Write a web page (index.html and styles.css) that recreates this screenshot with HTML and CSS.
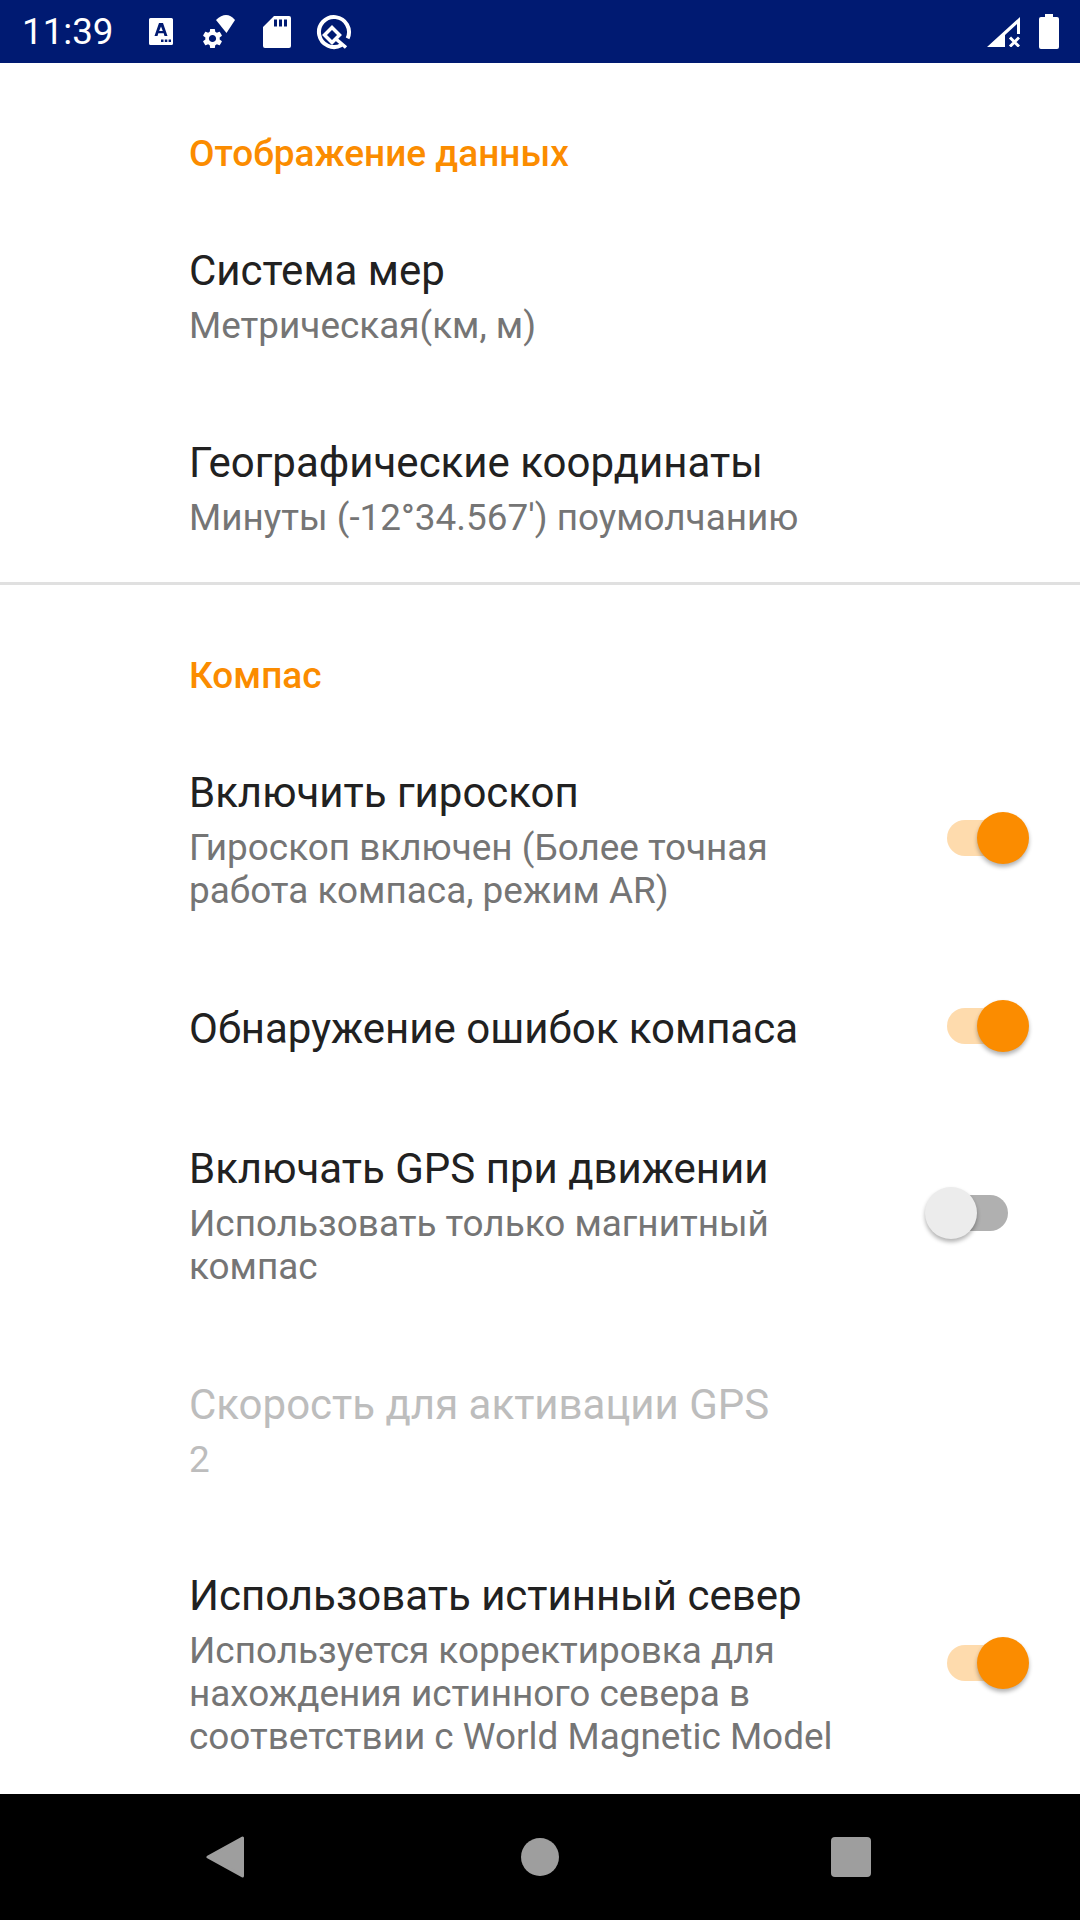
FILE: index.html
```html
<!DOCTYPE html>
<html lang="ru">
<head>
<meta charset="utf-8">
<title>Настройки</title>
<link rel="stylesheet" href="styles.css">
</head>
<body>
<div class="screen">
  <header class="statusbar">
    <div class="status-left">
      <span class="clock">11:39</span>
      <svg class="ic ic-a" viewBox="0 0 24 27"><path fill="#fff" fill-rule="evenodd" d="M1.500 0h21A1.500 1.500 0 0 1 24 1.500v24a1.500 1.500 0 0 1-1.500 1.500h-21A1.500 1.500 0 0 1 0 25.500v-24A1.500 1.500 0 0 1 1.500 0zM10 5L5.500 18h3l.8-2.800h5.400l.8 2.800h3L14 5zM12 8.500l1.800 4.500h-3.600zM12 21.500h2.500V24H12zM15.800 21.500h2.500V24h-2.500zM19.600 21.500h2.400V24h-2.400z"/></svg>
      <svg class="ic ic-gear" viewBox="0 0 33 33"><path fill="#fff" d="M14 5Q24.500-5 33 5L24.500 18z"/><path fill="#fff" transform="translate(-1.500 11.500)" d="M19.140 12.940c.04-.3.060-.61.060-.94 0-.32-.02-.64-.07-.94l2.030-1.580a.49.49 0 0 0 .12-.61l-1.920-3.320a.488.488 0 0 0-.59-.22l-2.390.96c-.5-.38-1.030-.7-1.620-.94l-.36-2.540a.484.484 0 0 0-.48-.41h-3.840c-.24 0-.43.17-.47.41l-.36 2.540c-.59.24-1.130.57-1.620.94l-2.390-.96c-.22-.08-.47 0-.59.22L2.740 8.870c-.12.21-.08.47.12.61l2.030 1.580c-.05.3-.09.63-.09.94s.02.64.07.94l-2.030 1.580a.49.49 0 0 0-.12.61l1.920 3.320c.12.22.37.29.59.22l2.390-.96c.5.38 1.030.7 1.620.94l.36 2.540c.05.24.24.41.48.41h3.840c.24 0 .44-.17.47-.41l.36-2.540c.59-.24 1.130-.56 1.620-.94l2.390.96c.22.08.47 0 .59-.22l1.920-3.320c.12-.22.07-.47-.12-.61l-2.010-1.580zM12 15.600c-1.980 0-3.600-1.620-3.600-3.600s1.620-3.600 3.600-3.600 3.600 1.620 3.600 3.600-1.620 3.600-3.600 3.600z"/></svg>
      <svg class="ic ic-sd" viewBox="0 0 28 32"><path fill="#fff" fill-rule="evenodd" d="M11 0h15a2 2 0 0 1 2 2v28a2 2 0 0 1-2 2H2a2 2 0 0 1-2-2V11zM11 3.500v7h3v-7zM16 3.500v7h3v-7zM21 3.500v7h3v-7z"/></svg>
      <svg class="ic ic-q" viewBox="0 0 36 36"><path fill="none" stroke="#fff" stroke-width="4" d="M25.500 31A15 15 0 1 1 31.600 24.300"/><path fill="none" stroke="#fff" stroke-width="3.500" d="M16 13.500L23.500 21 16 28.500 8.500 21zM20 25L30 33.500"/></svg>
    </div>
    <div class="status-right">
      <svg class="ic ic-signal" viewBox="0 0 33 30"><path fill="#fff" d="M0 30L33 0v17h-3V7L18 18v12z"/><path stroke="#fff" stroke-width="3" d="M23 20.500l9 9M32 20.500l-9 9"/></svg>
      <svg class="ic ic-batt" viewBox="0 0 20 35"><path fill="#fff" d="M6 0h8v3h4a2 2 0 0 1 2 2v28a2 2 0 0 1-2 2H2a2 2 0 0 1-2-2V5a2 2 0 0 1 2-2h4z"/></svg>
    </div>
  </header>

  <main class="prefs">
    <section class="group group-first">
      <h2 class="group-title">Отображение данных</h2>
      <div class="rows">
        <div class="row"><div class="text"><div class="title">Система мер</div><div class="sub">Метрическая(км, м)</div></div></div>
        <div class="row"><div class="text"><div class="title">Географические координаты</div><div class="sub">Минуты (-12°34.567') поумолчанию</div></div></div>
      </div>
    </section>
    <section class="group group-compass">
      <h2 class="group-title">Компас</h2>
      <div class="rows">
        <div class="row"><div class="text"><div class="title">Включить гироскоп</div><div class="sub">Гироскоп включен (Более точная<br>работа компаса, режим AR)</div></div><span class="switch on"></span></div>
        <div class="row"><div class="text"><div class="title">Обнаружение ошибок компаса</div></div><span class="switch on"></span></div>
        <div class="row"><div class="text"><div class="title">Включать GPS при движении</div><div class="sub">Использовать только магнитный<br>компас</div></div><span class="switch off"></span></div>
        <div class="row disabled"><div class="text"><div class="title">Скорость для активации GPS</div><div class="sub">2</div></div></div>
        <div class="row row-tall"><div class="text"><div class="title">Использовать истинный север</div><div class="sub">Используется корректировка для<br>нахождения истинного севера в<br>соответствии с World Magnetic Model</div></div><span class="switch on"></span></div>
      </div>
    </section>
  </main>

  <nav class="navbar">
    <svg class="nav-ic" viewBox="0 0 38 42"><path fill="#9e9e9e" stroke="#9e9e9e" stroke-width="3" stroke-linejoin="round" d="M2 21L36.500 2v38z"/></svg>
    <span class="nav-home"></span>
    <span class="nav-square"></span>
  </nav>
</div>
</body>
</html>
```
FILE: styles.css
```css
* { box-sizing: border-box; }
html, body { margin: 0; padding: 0; }
body { width: 1080px; height: 1920px; font-family: Roboto, sans-serif; background: #fff; overflow: hidden; }
.screen { width: 1080px; height: 1920px; display: flex; flex-direction: column; }

.statusbar { height: 63px; flex: none; background: #001a72; display: flex; justify-content: space-between; align-items: center; padding: 0 21px 0 22px; color: #fff; }
.status-left { display: flex; align-items: center; }
.clock { font-size: 36.750px; width: 127px; }
.ic { display: block; flex: none; }
.ic-a { width: 24px; height: 27px; margin-right: 29px; }
.ic-gear { width: 33px; height: 33px; margin-right: 28px; }
.ic-sd { width: 28px; height: 32px; margin-right: 25px; }
.ic-q { width: 36px; height: 36px; }
.status-right { display: flex; align-items: center; gap: 19px; }
.ic-signal { width: 33px; height: 30px; }
.ic-batt { width: 20px; height: 35px; }

.prefs { flex: 1; min-height: 0; }
.group-first { padding: 69px 0 43px; border-bottom: 3px solid #e0e0e0; }
.group-compass { padding-top: 69px; }
.group-title { margin: 0 0 71px 189px; font-size: 37px; line-height: 43px; font-weight: 500; color: #fb8c00; }

.rows { display: flex; flex-direction: column; gap: 91px; }
.group-compass .rows { gap: 90px; }
.row { display: flex; align-items: center; padding: 0 51px 0 189px; }
.disabled { margin-top: 2px; }
.text { flex: 1; min-width: 0; }
.title { font-size: 42px; line-height: 49px; color: #212121; }
.sub { font-size: 36.900px; line-height: 43px; color: #757575; margin-top: 9px; }
.disabled .title, .disabled .sub { color: #bdbdbd; }

.switch { position: relative; display: block; flex: none; width: 82px; height: 52px; margin: -2px 0 2px; }
.switch::before { content: ""; position: absolute; left: 0; top: 8px; width: 62px; height: 36px; border-radius: 18px; }
.switch::after { content: ""; position: absolute; top: 0; width: 52px; height: 52px; border-radius: 50%; box-shadow: 0 3px 4px rgba(0,0,0,.3); }
.switch.on::before { background: #fedbad; }
.switch.on::after { right: 0; background: #fb8c00; }
.switch.off { margin: -3px 21px 3px 0; }
.switch.off::before { left: 20px; background: #b0b0b0; }
.switch.off::after { left: -1px; background: #ececec; }
.row-tall .switch { margin: -2px 0 2px; }

.navbar { height: 126px; flex: none; background: #000; position: relative; }
.nav-ic { position: absolute; left: 206px; top: 42px; width: 38px; height: 42px; }
.nav-home { position: absolute; left: 521px; top: 44px; width: 38px; height: 38px; border-radius: 50%; background: #9e9e9e; }
.nav-square { position: absolute; left: 831px; top: 43px; width: 40px; height: 40px; border-radius: 4px; background: #9e9e9e; }
```
